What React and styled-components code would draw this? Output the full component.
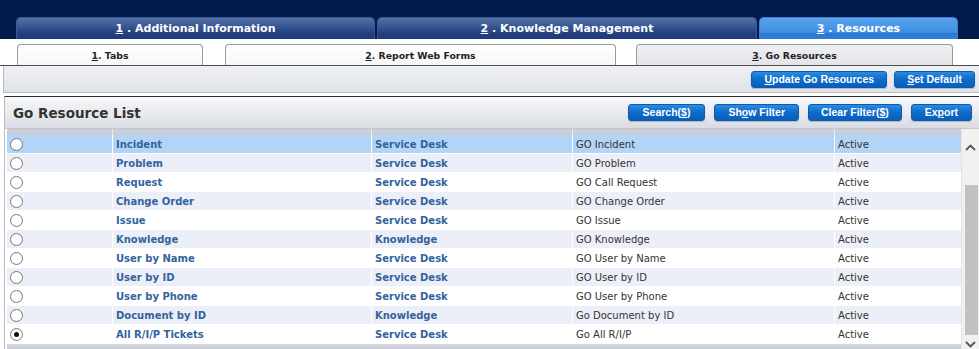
import styled, { createGlobalStyle } from "styled-components";

const GlobalStyle = createGlobalStyle`
  html, body {
    margin: 0;
    padding: 0;
    background: #ffffff;
    width: 979px;
    height: 349px;
    overflow: hidden;
  }
  body {
    font-family: "DejaVu Sans", Verdana, sans-serif;
  }
`;

const Page = styled.div`
  width: 979px;
  height: 349px;
  display: flex;
  flex-direction: column;
  overflow: hidden;
`;

const TopNav = styled.div`
  height: 39px;
  box-sizing: border-box;
  background: #011a49;
  padding: 17px 0 0 16px;
  display: flex;
  align-items: flex-end;
  gap: 2px;
`;

const TopTab = styled.div`
  width: ${(p) => p.$w}px;
  height: 22px;
  box-sizing: border-box;
  border-radius: 5px 5px 0 0;
  display: flex;
  align-items: center;
  justify-content: center;
  font-size: 11px;
  font-weight: bold;
  color: #ffffff;
  background: ${(p) =>
    p.$active
      ? "linear-gradient(#5aa2ec, #3d8ee2 70%, #2a78d0 72%, #2f7fd6)"
      : "linear-gradient(#5572a8, #34538f 45%, #233f7e 75%, #1f3a78)"};
  border: 1px solid ${(p) => (p.$active ? "#3b82d4" : "#3b5996")};
  border-bottom: none;
`;

const Key = styled.span`
  text-decoration: underline;
`;

const SubNav = styled.div`
  height: 27px;
  box-sizing: border-box;
  background: #ffffff;
  padding: 5px 0 0 17px;
  display: flex;
  align-items: flex-end;
  border-bottom: 1px solid #4d4d4d;
`;

const SubTab = styled.div`
  width: ${(p) => p.$w}px;
  margin-right: ${(p) => p.$gap || 0}px;
  height: 21px;
  box-sizing: border-box;
  border: 1px solid #9a9a9a;
  border-bottom: none;
  border-radius: 4px 4px 0 0;
  background: ${(p) => (p.$active ? "linear-gradient(#eeeff2, #e2e4e9)" : "linear-gradient(#ffffff, #f6f6f6)")};
  display: flex;
  align-items: center;
  justify-content: center;
  font-size: 9.3px;
  font-weight: bold;
  color: #222222;
`;

const Toolbar = styled.div`
  height: 27px;
  box-sizing: border-box;
  margin-left: 3px;
  border-left: 1px solid #b5b8c0;
  border-bottom: 1px solid #b9bcc4;
  background: linear-gradient(#eef0f4, #dfe2e8);
  display: flex;
  align-items: center;
  justify-content: flex-end;
  gap: 7px;
  padding-right: 4px;
`;

const Button = styled.button`
  height: 17px;
  padding: 0 ${(p) => p.$pad || 12}px;
  border: 1px solid #0a5bb0;
  border-radius: 3px;
  background: linear-gradient(#2b8be0, #0f6bc8 50%, #085fbd);
  color: #ffffff;
  font-family: "Liberation Sans", Arial, sans-serif;
  font-size: 10.5px;
  font-weight: bold;
  line-height: 15px;
  white-space: nowrap;
  box-shadow: 0 1px 1px rgba(0, 0, 0, 0.2);
`;

const Panel = styled.div`
  flex: 1;
  margin: 3px 0 0 4px;
  border-top: 1px solid #2b2b2b;
  border-left: 1px solid #b8bbc3;
  display: flex;
  flex-direction: column;
  min-height: 0;
`;

const PanelHeader = styled.div`
  height: 32px;
  box-sizing: border-box;
  background: linear-gradient(#f6f7f9, #e6e8ed 60%, #d9dce3);
  border-bottom: 1px solid #c4c7ce;
  display: flex;
  align-items: center;
  padding: 0 7px 0 8px;
  gap: 9px;
`;

const Title = styled.div`
  flex: 1;
  font-size: 13.5px;
  font-weight: bold;
  color: #333333;
`;

const TableWrap = styled.div`
  flex: 1;
  display: flex;
  min-height: 0;
  padding-left: 2px;
`;

const Grid = styled.div`
  flex: 1;
  display: flex;
  flex-direction: column;
  overflow: hidden;
`;

const HeadStrip = styled.div`
  height: 6px;
  flex-shrink: 0;
  display: grid;
  grid-template-columns: 105px 259px 201px 262px 128px;
  background: #c9ced9;
  & > div + div {
    border-left: 1px solid #e8ebf1;
  }
`;

const Row = styled.div`
  height: 19px;
  flex-shrink: 0;
  box-sizing: border-box;
  display: grid;
  grid-template-columns: 105px 259px 201px 262px 128px;
  align-items: center;
  border-bottom: 1px solid #ffffff;
  background: ${(p) => (p.$selected ? "#b2d4f6" : p.$alt ? "#eceff8" : "#ffffff")};
  font-size: 10px;
  color: #333333;
`;

const Cell = styled.div`
  height: 100%;
  display: flex;
  align-items: center;
  padding-left: 3px;
  white-space: nowrap;
  border-left: ${(p) => (p.$first ? "none" : "1px solid #ffffff")};
  box-sizing: border-box;
  color: ${(p) => (p.$link ? "#33639c" : "#333333")};
  font-weight: ${(p) => (p.$link ? "bold" : "normal")};
`;

const Radio = styled.span`
  width: 11px;
  height: 11px;
  border-radius: 50%;
  border: 1px solid #7a7a7a;
  background: radial-gradient(#ffffff 55%, #e9e9e9);
  display: flex;
  align-items: center;
  justify-content: center;
  &::after {
    content: "";
    width: 5px;
    height: 5px;
    border-radius: 50%;
    background: ${(p) => (p.$checked ? "#111111" : "transparent")};
  }
`;

const BottomStrip = styled.div`
  flex: 1;
  background: linear-gradient(#d4d8e0, #c9cdd6);
`;

const Scrollbar = styled.div`
  width: 17px;
  background: #f1f1f1;
  display: flex;
  flex-direction: column;
  align-items: center;
  border-left: 1px solid #e4e4e4;
`;

const Arrow = styled.div`
  height: ${(p) => p.$h}px;
  flex-shrink: 0;
  display: flex;
  align-items: center;
  justify-content: center;
`;

const Thumb = styled.div`
  width: 13px;
  height: 150px;
  flex-shrink: 0;
  margin-left: 2px;
  background: #c1c1c1;
`;

const Track = styled.div`
  flex: ${(p) => (p.$h ? `0 0 ${p.$h}px` : 1)};
`;

const rows = [
  ["Incident", "Service Desk", "GO Incident"],
  ["Problem", "Service Desk", "GO Problem"],
  ["Request", "Service Desk", "GO Call Request"],
  ["Change Order", "Service Desk", "GO Change Order"],
  ["Issue", "Service Desk", "GO Issue"],
  ["Knowledge", "Knowledge", "GO Knowledge"],
  ["User by Name", "Service Desk", "GO User by Name"],
  ["User by ID", "Service Desk", "GO User by ID"],
  ["User by Phone", "Service Desk", "GO User by Phone"],
  ["Document by ID", "Knowledge", "Go Document by ID"],
  ["All R/I/P Tickets", "Service Desk", "Go All R/I/P"],
];

const Chevron = ({ up }) => (
  <svg width="11" height="7" viewBox="0 0 11 7">
    <path
      d={up ? "M1 6 L5.5 1.5 L10 6" : "M1 1 L5.5 5.5 L10 1"}
      fill="none"
      stroke="#555"
      strokeWidth="1.8"
    />
  </svg>
);

export default function App() {
  return (
    <Page>
      <GlobalStyle />
      <TopNav>
        <TopTab $w={359}>
          <Key>1</Key>&nbsp;. Additional Information
        </TopTab>
        <TopTab $w={380}>
          <Key>2</Key>&nbsp;. Knowledge Management
        </TopTab>
        <TopTab $w={199} $active>
          <Key>3</Key>&nbsp;. Resources
        </TopTab>
      </TopNav>

      <SubNav>
        <SubTab $w={186} $gap={22}>
          <span>
            <Key>1</Key>. Tabs
          </span>
        </SubTab>
        <SubTab $w={391} $gap={20}>
          <span>
            <Key>2</Key>. Report Web Forms
          </span>
        </SubTab>
        <SubTab $w={317} $active>
          <span>
            <Key>3</Key>. Go Resources
          </span>
        </SubTab>
      </SubNav>

      <Toolbar>
        <Button $pad={12}>
          <Key>U</Key>pdate Go Resources
        </Button>
        <Button $pad={12}>
          <Key>S</Key>et Default
        </Button>
      </Toolbar>

      <Panel>
        <PanelHeader>
          <Title>Go Resource List</Title>
          <Button $pad={14}>
            Search(<Key>$</Key>)
          </Button>
          <Button $pad={13}>
            Sh<Key>o</Key>w Filter
          </Button>
          <Button $pad={12}>
            Clear Filter(<Key>$</Key>)
          </Button>
          <Button $pad={13}>
            Ex<Key>p</Key>ort
          </Button>
        </PanelHeader>

        <TableWrap>
          <Grid>
            <HeadStrip>
              <div />
              <div />
              <div />
              <div />
              <div />
            </HeadStrip>
            {rows.map(([name, group, desc], i) => (
              <Row key={name} $selected={i === 0} $alt={i % 2 === 1}>
                <Cell $first>
                  <Radio $checked={i === rows.length - 1} />
                </Cell>
                <Cell $link>{name}</Cell>
                <Cell $link>{group}</Cell>
                <Cell>{desc}</Cell>
                <Cell>Active</Cell>
              </Row>
            ))}
            <BottomStrip />
          </Grid>
          <Scrollbar>
            <Arrow $h={36}>
              <Chevron up />
            </Arrow>
            <Track $h={20} />
            <Thumb />
            <Track />
            <Arrow $h={10}>
              <Chevron />
            </Arrow>
          </Scrollbar>
        </TableWrap>
      </Panel>
    </Page>
  );
}
